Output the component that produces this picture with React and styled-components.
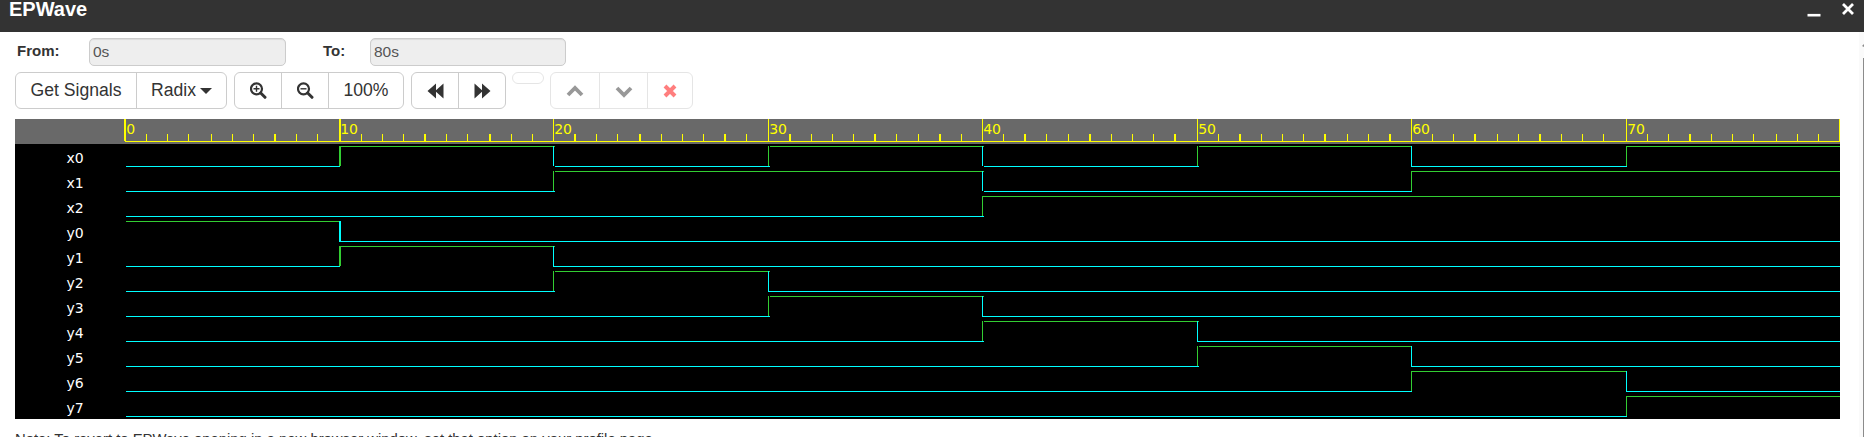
import React from "react";
import styled, { createGlobalStyle } from "styled-components";

const Global = createGlobalStyle`
  * { box-sizing: border-box; }
  body { margin: 0; background: #fff; overflow: hidden; font-family: "Liberation Sans", Arial, sans-serif; color: #333; }
`;

const Window = styled.div`
  height: 437px;
  display: flex;
  flex-direction: column;
  overflow: hidden;
`;
const TitleBar = styled.header`
  height: 32px;
  flex: none;
  display: flex;
  justify-content: space-between;
  background: #333;
  color: #fff;
  padding: 0 9px;
`;
const Title = styled.h1`
  margin: -3px 0 0;
  font-size: 20px;
  line-height: 24px;
`;
const WindowControls = styled.div`
  display: flex;
  gap: 20px;
`;
const Body = styled.div`
  flex: 1;
  min-height: 0;
  display: flex;
`;
const Content = styled.main`
  flex: 1;
  min-width: 0;
  padding: 6px 0 0 15px;
`;
const ScrollTrack = styled.div`
  width: 5px;
  background: #fafafa;
  padding-top: 12px;
  display: flex;
  flex-direction: column;
  align-items: flex-end;
`;
const ScrollArrow = styled.div`
  flex: none;
  margin-bottom: 11px;
  border-right: 2px solid #8b8b8b;
  border-top: 2px solid transparent;
  border-bottom: 1px solid transparent;
`;
const ScrollThumb = styled.div`
  flex: 1;
  width: 1px;
  background: #8b8b8b;
`;
const Fields = styled.div`
  display: flex;
  height: 28px;
`;
const Label = styled.label`
  width: ${(p) => p.$w}px;
  padding-left: 2px;
  font-size: 15px;
  font-weight: bold;
  line-height: 26px;
`;
const Field = styled.input`
  width: ${(p) => p.$w}px;
  height: 28px;
  margin-right: ${(p) => p.$gap || 0}px;
  padding: 0 3px;
  border: 1px solid #ccc;
  border-radius: 5px;
  background: #eee;
  box-shadow: inset 0 1px 1px rgba(0, 0, 0, 0.075);
  font: 15.5px "Liberation Sans", Arial, sans-serif;
  color: #555;
`;
const Toolbar = styled.div`
  display: flex;
  align-items: flex-start;
  margin-top: 6px;
  height: 47px;
`;
const Group = styled.div`
  display: flex;
  height: ${(p) => p.$h || 37}px;
  margin-right: ${(p) => p.$gap || 7}px;
  border: 1px solid #ccc;
  border-radius: 6px;
  opacity: ${(p) => (p.$muted ? 0.5 : 1)};
`;
const Button = styled.button`
  width: ${(p) => p.$w}px;
  display: flex;
  align-items: center;
  justify-content: center;
  padding: 0;
  border: 0;
  background: none;
  color: #333;
  font: 17.6px "Liberation Sans", Arial, sans-serif;
  & + & { border-left: 1px solid #ccc; }
`;
const Caret = styled.span`
  margin-left: 4px;
  border-top: 6px solid #333;
  border-left: 6px solid transparent;
  border-right: 6px solid transparent;
`;
const Waves = styled.svg`
  display: block;
  width: 1825px;
  height: 300px;
  background: #000;
  shape-rendering: crispEdges;
  text { font: 14px "DejaVu Sans", "Noto Sans", sans-serif; }
`;
const Note = styled.p`
  margin: 10px 0 0;
  font-size: 14.85px;
  line-height: 20px;
`;

const EDGES = [110, 324, 538, 753, 967, 1182, 1396, 1611, 1825];
const MINOR_TICKS = [
  131, 152, 173, 196, 217, 238, 259, 281, 302,
  346, 367, 388, 409, 431, 452, 474, 496, 517,
  559, 581, 602, 624, 646, 667, 688, 709, 731,
  774, 796, 817, 838, 859, 881, 903, 924, 946,
  988, 1009, 1031, 1053, 1074, 1096, 1117, 1138, 1159,
  1203, 1224, 1246, 1267, 1288, 1309, 1332, 1353, 1374,
  1417, 1438, 1459, 1482, 1503, 1524, 1546, 1567, 1588,
  1632, 1653, 1674, 1696, 1717, 1738, 1761, 1782, 1803,
];
const WIDE_TICKS = new Set([
  259, 409, 474, 559, 624, 709, 774, 859, 924, 1009, 1074, 1159, 1224, 1309, 1374, 1459, 1524, 1674,
]);
const SIGNALS = [
  ["x0", "01010101"], ["x1", "00110011"], ["x2", "00001111"],
  ["y0", "10000000"], ["y1", "01000000"], ["y2", "00100000"], ["y3", "00010000"],
  ["y4", "00001000"], ["y5", "00000100"], ["y6", "00000010"], ["y7", "00000001"],
];
const color = (v) => (v === "1" ? "#32cd32" : "#0ff");

function Ruler() {
  return (
    <g fill="#ff0">
      <rect width="1825" height="25" fill="#696969" />
      <rect x="110" y="22" width="1715" height="1" />
      {MINOR_TICKS.map((x) => (
        <rect key={x} x={x} y="15" width={WIDE_TICKS.has(x) ? 2 : 1} height="7" />
      ))}
      {EDGES.slice(0, 8).map((x, i) => (
        <g key={x}>
          <rect x={i ? x : x - 1} width={i < 2 ? 2 : 1} height="22" />
          <text x={x + 1.2} y="15">{i * 10}</text>
        </g>
      ))}
      <rect x="1824" width="1" height="22" />
    </g>
  );
}

function Signal({ name, bits, y }) {
  const runs = [];
  for (let i = 0; i < 8; i++) {
    const last = runs[runs.length - 1];
    if (last && last.v === bits[i]) last.end = i + 1;
    else runs.push({ v: bits[i], start: i, end: i + 1 });
  }
  const soft = (k) => k >= 2 && k <= 5;
  return (
    <g transform={`translate(0 ${y})`}>
      <text x="51.5" y="19" fill="#fff">{name}</text>
      {runs.map(({ v, start, end }) => {
        const from = start === 0 ? 111 : EDGES[start] + (soft(start) && end < 8 ? 2 : 0);
        const to = EDGES[end] + (soft(end) ? 2 : 1);
        return (
          <g key={start} fill={color(v)}>
            <rect x={from} y={v === "1" ? 2 : 22} width={to - from} height="1" />
            {start > 0 && <rect x={EDGES[start]} y="2" width={start === 1 ? 2 : 1} height="20" />}
          </g>
        );
      })}
    </g>
  );
}

function Magnifier({ plus }) {
  return (
    <svg width="17" height="17" fill="none" stroke="#333">
      <circle cx="6.5" cy="6.8" r="5.5" strokeWidth="2.2" />
      <path d="M10.7 11l4.3 4.3" strokeWidth="3" strokeLinecap="round" />
      <path d={plus ? "M3.5 6.8h6M6.5 3.8v6" : "M3.5 6.8h6"} strokeWidth="1.4" />
    </svg>
  );
}

function Skip({ forward }) {
  return (
    <svg width="17" height="16" fill="#333">
      <path d={forward ? "M.5.5L8 7.3V.5L16.5 8 8 15.5V8.7L.5 15.5z" : "M16.5.5L9 7.3V.5L.5 8 9 15.5V8.7l7.5 6.8z"} />
    </svg>
  );
}

export default function App() {
  return (
    <Window>
      <Global />
      <TitleBar>
        <Title>EPWave</Title>
        <WindowControls>
          <svg width="14" height="18"><path d="M.5 15.2h13" stroke="#fff" strokeWidth="2.6" /></svg>
          <svg width="14" height="18"><path d="M2 4l10 10M12 4L2 14" stroke="#fff" strokeWidth="2.8" /></svg>
        </WindowControls>
      </TitleBar>
      <Body>
        <Content>
          <Fields>
            <Label $w={74}>From:</Label>
            <Field $w={197} $gap={35} defaultValue="0s" />
            <Label $w={49}>To:</Label>
            <Field $w={196} defaultValue="80s" />
          </Fields>
          <Toolbar>
            <Group>
              <Button $w={120}>Get Signals</Button>
              <Button $w={90}>Radix<Caret /></Button>
            </Group>
            <Group>
              <Button $w={46}><Magnifier plus /></Button>
              <Button $w={47}><Magnifier /></Button>
              <Button $w={75}>100%</Button>
            </Group>
            <Group $gap={6}>
              <Button $w={46}><Skip /></Button>
              <Button $w={47}><Skip forward /></Button>
            </Group>
            <Group $muted $h={12} $gap={6}><Button $w={30} /></Group>
            <Group $muted>
              <Button $w={48}><svg width="18" height="18"><path d="M2 13l7-7 7 7" fill="none" stroke="#333" strokeWidth="3.8" /></svg></Button>
              <Button $w={48}><svg width="18" height="18"><path d="M2 6l7 7 7-7" fill="none" stroke="#333" strokeWidth="3.8" /></svg></Button>
              <Button $w={45}><svg width="14" height="14"><path d="M2 2l10 10M12 2L2 12" stroke="#f00" strokeWidth="4" /></svg></Button>
            </Group>
          </Toolbar>
          <Waves>
            <Ruler />
            {SIGNALS.map(([name, bits], i) => (
              <Signal key={name} name={name} bits={bits} y={25 + i * 25} />
            ))}
          </Waves>
          <Note>Note: To revert to EPWave opening in a new browser window, set that option on your profile page.</Note>
        </Content>
        <ScrollTrack><ScrollArrow /><ScrollThumb /></ScrollTrack>
      </Body>
    </Window>
  );
}
